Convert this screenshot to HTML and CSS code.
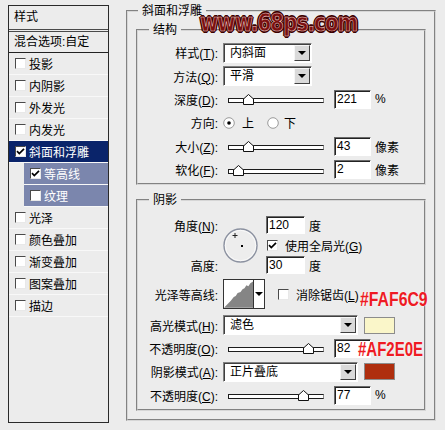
FILE: index.html
```html
<!DOCTYPE html>
<html>
	<head>
		<meta charset="UTF-8">
		<title>图层样式</title>
		<link rel="stylesheet" href="styles.css">
	</head>
	<body>
		<div class="dlg">
			<div class="side">
				<div class="side-head">样式</div>
				<div class="side-blend">混合选项:自定</div>
				<ul class="fx">
					<li><span class="cb"></span>投影</li>
					<li><span class="cb"></span>内阴影</li>
					<li><span class="cb"></span>外发光</li>
					<li><span class="cb"></span>内发光</li>
					<li class="sel"><span class="cb"><svg width="9" height="9" viewBox="0 0 9 9"><path d="M1 4.2 L3.3 6.6 L8 1.8" stroke="#000" stroke-width="1.7" fill="none"/></svg></span>斜面和浮雕</li>
					<li class="sub"><span class="cb"><svg width="9" height="9" viewBox="0 0 9 9"><path d="M1 4.2 L3.3 6.6 L8 1.8" stroke="#000" stroke-width="1.7" fill="none"/></svg></span>等高线</li>
					<li class="sub"><span class="cb"></span>纹理</li>
					<li><span class="cb"></span>光泽</li>
					<li><span class="cb"></span>颜色叠加</li>
					<li><span class="cb"></span>渐变叠加</li>
					<li><span class="cb"></span>图案叠加</li>
					<li><span class="cb"></span>描边</li>
				</ul>
			</div>

			<fieldset class="main">
				<legend>斜面和浮雕</legend>

				<fieldset class="grp">
					<legend>结构</legend>
					<div class="row">
						<label class="lbl">样式(<u>T</u>):</label>
						<div class="combo w88"><span class="val">内斜面</span><span class="btn"><i></i></span></div>
					</div>
					<div class="row">
						<label class="lbl">方法(<u>Q</u>):</label>
						<div class="combo w88"><span class="val">平滑</span><span class="btn"><i></i></span></div>
					</div>
					<div class="row">
						<label class="lbl">深度(<u>D</u>):</label>
						<div class="slider"><div class="track"></div><svg class="thumb" style="left:20px" width="11" height="11" viewBox="0 0 11 11"><polygon points="5.5,0.5 10.5,5 10.5,10.5 0.5,10.5 0.5,5" fill="#fff" stroke="#111"/></svg></div>
						<span class="num">221</span><span class="unit">%</span>
					</div>
					<div class="row">
						<label class="lbl">方向:</label>
						<svg class="radio" width="12" height="12" viewBox="0 0 12 12"><circle cx="6" cy="6" r="5.3" fill="#fff" stroke="#9a9a9a"/><circle cx="6" cy="6" r="1.8" fill="#000"/></svg>
						<span class="rt">上</span>
						<svg class="radio r2" width="12" height="12" viewBox="0 0 12 12"><circle cx="6" cy="6" r="5.3" fill="#fff" stroke="#9a9a9a"/></svg>
						<span class="rt">下</span>
					</div>
					<div class="row">
						<label class="lbl">大小(<u>Z</u>):</label>
						<div class="slider"><div class="track"></div><svg class="thumb" style="left:20px" width="11" height="11" viewBox="0 0 11 11"><polygon points="5.5,0.5 10.5,5 10.5,10.5 0.5,10.5 0.5,5" fill="#fff" stroke="#111"/></svg></div>
						<span class="num">43</span><span class="unit">像素</span>
					</div>
					<div class="row">
						<label class="lbl">软化(<u>F</u>):</label>
						<div class="slider"><div class="track"></div><svg class="thumb" style="left:10px" width="11" height="11" viewBox="0 0 11 11"><polygon points="5.5,0.5 10.5,5 10.5,10.5 0.5,10.5 0.5,5" fill="#fff" stroke="#111"/></svg></div>
						<span class="num">2</span><span class="unit">像素</span>
					</div>
				</fieldset>

				<fieldset class="grp shadow">
					<legend>阴影</legend>
					<div class="ang">
						<label class="lbl a1">角度(<u>N</u>):</label>
						<svg class="dial" width="35" height="35" viewBox="0 0 35 35">
							<circle cx="17.5" cy="17.5" r="16.5" fill="#ededed" stroke="#8b91a0" stroke-width="1.4"/>
							<circle cx="17.5" cy="17.5" r="15.2" fill="none" stroke="#fafafa" stroke-width="1"/>
							<path d="M9.5 7.5 H14.5 M12 5 V10" stroke="#222" stroke-width="1"/>
							<rect x="18" y="17" width="2" height="2" fill="#000"/>
						</svg>
						<div class="c1"><span class="num w39">120</span><span class="unit">度</span></div>
						<div class="c2"><span class="chk"><svg width="9" height="9" viewBox="0 0 9 9"><path d="M1 4.2 L3.3 6.6 L8 1.8" stroke="#000" stroke-width="1.7" fill="none"/></svg></span><span class="ct">使用全局光(<u>G</u>)</span></div>
						<label class="lbl a3">高度:</label>
						<div class="c3"><span class="num w39">30</span><span class="unit">度</span></div>
					</div>
					<div class="row tall">
						<label class="lbl">光泽等高线:</label>
						<div class="contour">
							<svg width="30" height="28" viewBox="0 0 30 28"><polygon points="0,28 4,24 7,21 10,17 12,16 14,13 17,12 19,9 21,8 23,5 25,6 27,3 30,1 30,28" fill="#858585"/></svg>
							<span class="cbtn"><i></i></span>
						</div>
						<span class="chk aa"></span><span class="ct">消除锯齿(<u>L</u>)</span>
						<span class="note">#FAF6C9</span>
					</div>
					<div class="row">
						<label class="lbl">高光模式(<u>H</u>):</label>
						<div class="combo w135"><span class="val">滤色</span><span class="btn"><i></i></span></div>
						<span class="swatch hi"></span>
					</div>
					<div class="row pin">
						<label class="lbl">不透明度(<u>O</u>):</label>
						<div class="slider"><div class="track"></div><svg class="thumb" style="left:80px" width="11" height="11" viewBox="0 0 11 11"><polygon points="5.5,0.5 10.5,5 10.5,10.5 0.5,10.5 0.5,5" fill="#fff" stroke="#111"/></svg></div>
						<span class="num">82</span>
						<span class="note over">#AF2E0E</span>
					</div>
					<div class="row">
						<label class="lbl">阴影模式(<u>A</u>):</label>
						<div class="combo w135"><span class="val">正片叠底</span><span class="btn"><i></i></span></div>
						<span class="swatch sh"></span>
					</div>
					<div class="row">
						<label class="lbl">不透明度(<u>C</u>):</label>
						<div class="slider"><div class="track"></div><svg class="thumb" style="left:75px" width="11" height="11" viewBox="0 0 11 11"><polygon points="5.5,0.5 10.5,5 10.5,10.5 0.5,10.5 0.5,5" fill="#fff" stroke="#111"/></svg></div>
						<span class="num">77</span><span class="unit">%</span>
					</div>
				</fieldset>
			</fieldset>

			<div class="mark">www.68ps.com</div>
		</div>
	</body>
</html>
```

FILE: styles.css
```css
*{
	margin: 0;
	padding: 0;
	box-sizing: border-box;
}
body{
	background: #ececec;
	font: 12px "Liberation Sans", "Noto Sans CJK SC", sans-serif;
	color: #000;
}
.dlg{
	position: relative;
	display: flex;
	align-items: flex-start;
	padding: 4px 0 0 8px;
	height: 430px;
	overflow: hidden;
}

/* left list */
.side{
	margin-top: 1px;
	width: 101px;
	height: 418px;
	border: 1px solid #2a2a2a;
	background: #ececec;
	flex: none;
}
.side-head{
	height: 26px;
	line-height: 22px;
	padding-left: 5px;
	border-bottom: 3px double #4a4a4a;
}
.side-blend{
	height: 21px;
	line-height: 20px;
	padding-left: 5px;
	border-bottom: 1px solid #222;
}
.fx{
	list-style: none;
}
.fx li{
	display: flex;
	align-items: center;
	height: 22px;
	padding-left: 6px;
	border-bottom: 1px solid #f8f8f8;
}
.fx li.sel{
	background: #0a246a;
	color: #fff;
}
.fx li.sub{
	margin-left: 15px;
	background: #7b86ad;
	color: #fff;
}
.cb, .chk{
	display: flex;
	align-items: center;
	justify-content: center;
	width: 11px;
	height: 11px;
	margin-right: 3px;
	background: #fff;
	border: 1px solid;
	border-color: #4a4a4a #e8e8e8 #e8e8e8 #4a4a4a;
	flex: none;
}

/* right panel */
fieldset{
	border: 2px groove #d6d6d6;
	min-width: 0;
}
legend{
	line-height: 14px;
	padding: 0 4px;
}
.main{
	margin-left: 17px;
	width: 310px;
	padding: 0 8px 8px 8px;
	flex: none;
}
.main > legend{
	margin-left: 2px;
}
.grp{
	margin-top: 5px;
	padding: 4px 0 2px 0;
}
.grp > legend{
	margin-left: 11px;
}
.shadow{
	margin-top: 8px;
	padding: 8px 0 2px 0;
}
.row{
	display: flex;
	align-items: center;
	height: 23.4px;
}
.row.tall{
	height: 30px;
	margin: 4px 0;
}
.row.pin{
	position: relative;
}
.lbl{
	width: 85px;
	padding-right: 5px;
	text-align: right;
	flex: none;
	white-space: nowrap;
}

.combo{
	display: flex;
	height: 20px;
	background: #fff;
	border: 1px solid;
	border-color: #808080 #fff #fff #808080;
	box-shadow: inset 1px 1px 0 #404040;
	flex: none;
}
.w88{ width: 89px; }
.w135{ width: 135px; }
.combo .val{
	flex: 1;
	padding-left: 6px;
	line-height: 18px;
}
.combo .btn{
	width: 16px;
	margin: 1px 1px 1px 0;
	background: #dadada;
	border: 1px solid;
	border-color: #f6f6f6 #404040 #404040 #f6f6f6;
	display: flex;
	align-items: center;
	justify-content: center;
}
.combo .btn i, .cbtn i{
	border-left: 4px solid transparent;
	border-right: 4px solid transparent;
	border-top: 4px solid #000;
}

.slider{
	position: relative;
	width: 106px;
	height: 14px;
	flex: none;
}
.track{
	margin: 6px 5px 0;
	height: 5px;
	background: #fff;
	border: 1px solid #1c1c1c;
	border-right-color: #8a8a8a;
}
.thumb{
	position: absolute;
	top: 2px;
}
.num{
	display: block;
	width: 37px;
	height: 19px;
	margin-left: 5px;
	padding-left: 2px;
	line-height: 17px;
	background: #fff;
	border: 1px solid;
	border-color: #6a6a6a #fff #fff #6a6a6a;
	box-shadow: inset 1px 1px 0 #222;
	flex: none;
}
.num.w39{
	width: 39px;
	height: 18px;
	line-height: 16px;
	margin-left: 0;
}
.unit{
	margin-left: 4px;
}
.rt{
	margin-left: 7px;
}
.radio.r2{
	margin-left: 13px;
}
.r2 + .rt{
	margin-left: 5px;
}

.ang{
	display: grid;
	grid-template-columns: 85px 43px auto;
	grid-template-rows: repeat(3, 20px);
	align-items: center;
}
.ang .a1{ grid-area: 1 / 1; }
.ang .a3{ grid-area: 3 / 1; }
.ang .dial{ grid-area: 1 / 2 / 4 / 3; }
.ang .c1{ grid-area: 1 / 3; display: flex; align-items: center; }
.ang .c2{ grid-area: 2 / 3; display: flex; align-items: center; }
.ang .c3{ grid-area: 3 / 3; display: flex; align-items: center; }
.ang .chk{
	margin-left: 1px;
}
.ct{
	margin-left: 4px;
	white-space: nowrap;
}

.contour{
	display: flex;
	width: 42px;
	height: 30px;
	background: #fff;
	border: 1px solid #333;
	flex: none;
}
.cbtn{
	width: 11px;
	border-left: 1px solid #333;
	display: flex;
	align-items: center;
	justify-content: center;
}
.chk.aa{
	margin-left: 13px;
}

.swatch{
	width: 31px;
	height: 17px;
	margin-left: 6px;
	border: 1px solid #8c8c8c;
	flex: none;
}
.swatch.hi{ background: #faf6c9; }
.swatch.sh{ background: #af2e0e; }

.note{
	font: bold 20px "Liberation Sans", sans-serif;
	color: #ee1b24;
	text-shadow: 0 0 2px #fff;
	line-height: 20px;
	white-space: nowrap;
	align-self: flex-end;
	margin-left: 1px;
	transform: scaleX(0.79);
	transform-origin: left center;
}
.note.over{
	position: absolute;
	left: 220px;
	top: 2px;
	margin: 0;
	transform: scaleX(0.75);
}

.mark{
	position: absolute;
	left: 200px;
	top: 9px;
	font: bold 24px "DejaVu Sans", sans-serif;
	line-height: 28px;
	letter-spacing: -1px;
	color: #7a1010;
	transform: scaleX(0.82);
	transform-origin: left center;
	-webkit-text-stroke: 0.6px #f2cfc8;
	text-shadow: 1px 1px 0 #3c0000, -1px -1px 0 #3c0000, 1px -1px 0 #3c0000, -1px 1px 0 #3c0000, 2px 0 0 #3c0000, -2px 0 0 #3c0000, 0 2px 0 #3c0000, 0 -2px 0 #3c0000;
}
```
